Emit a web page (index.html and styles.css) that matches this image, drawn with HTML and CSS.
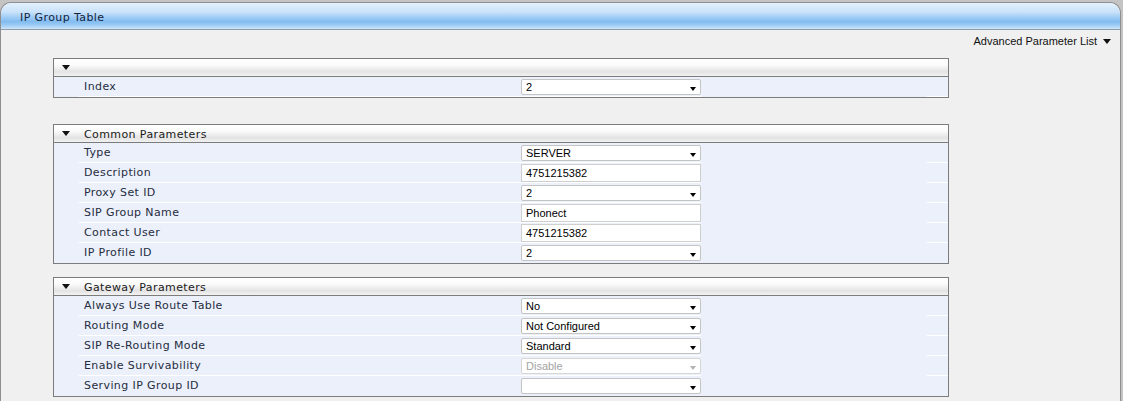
FILE: index.html
```html
<!DOCTYPE html>
<html>
<head>
<meta charset="utf-8">
<link rel="stylesheet" href="styles.css">
</head>
<body>
<div class="window">
  <div class="titlebar">IP Group Table</div>
  <div class="content">
    <div class="adv">Advanced Parameter List <span class="tri"></span></div>

    <div class="panel p1">
      <div class="phead"><span class="tri"></span></div>
      <div class="row"><span class="ind"></span><span class="lbl">Index</span><span class="val"><span class="sel"><span class="v">2</span><span class="arr"></span></span></span><span class="sp"></span><span class="end"></span></div>
    </div>

    <div class="panel p2">
      <div class="phead"><span class="tri"></span><span class="ht">Common Parameters</span></div>
      <div class="row"><span class="ind"></span><span class="lbl">Type</span><span class="val"><span class="sel"><span class="v">SERVER</span><span class="arr"></span></span></span><span class="sp"></span><span class="end"></span></div>
      <div class="row"><span class="ind"></span><span class="lbl">Description</span><span class="val"><span class="txt">4751215382</span></span><span class="sp"></span><span class="end"></span></div>
      <div class="row"><span class="ind"></span><span class="lbl">Proxy Set ID</span><span class="val"><span class="sel"><span class="v">2</span><span class="arr"></span></span></span><span class="sp"></span><span class="end"></span></div>
      <div class="row"><span class="ind"></span><span class="lbl">SIP Group Name</span><span class="val"><span class="txt">Phonect</span></span><span class="sp"></span><span class="end"></span></div>
      <div class="row"><span class="ind"></span><span class="lbl">Contact User</span><span class="val"><span class="txt">4751215382</span></span><span class="sp"></span><span class="end"></span></div>
      <div class="row last"><span class="ind"></span><span class="lbl">IP Profile ID</span><span class="val"><span class="sel"><span class="v">2</span><span class="arr"></span></span></span><span class="sp"></span><span class="end"></span></div>
    </div>

    <div class="panel p3">
      <div class="phead"><span class="tri"></span><span class="ht">Gateway Parameters</span></div>
      <div class="row"><span class="ind"></span><span class="lbl">Always Use Route Table</span><span class="val"><span class="sel"><span class="v">No</span><span class="arr"></span></span></span><span class="sp"></span><span class="end"></span></div>
      <div class="row"><span class="ind"></span><span class="lbl">Routing Mode</span><span class="val"><span class="sel"><span class="v">Not Configured</span><span class="arr"></span></span></span><span class="sp"></span><span class="end"></span></div>
      <div class="row"><span class="ind"></span><span class="lbl">SIP Re-Routing Mode</span><span class="val"><span class="sel"><span class="v">Standard</span><span class="arr"></span></span></span><span class="sp"></span><span class="end"></span></div>
      <div class="row"><span class="ind"></span><span class="lbl">Enable Survivability</span><span class="val"><span class="sel dis"><span class="v">Disable</span><span class="arr"></span></span></span><span class="sp"></span><span class="end"></span></div>
      <div class="row last"><span class="ind"></span><span class="lbl">Serving IP Group ID</span><span class="val"><span class="sel"><span class="v"></span><span class="arr"></span></span></span><span class="sp"></span><span class="end"></span></div>
    </div>
  </div>
</div>
</body>
</html>
```

FILE: styles.css
```css
html, body {
  margin: 0;
  padding: 0;
}
body {
  background: #c4c4c4;
  width: 1123px;
  height: 401px;
  overflow: hidden;
}
.window {
  margin: 2px 0 0 0;
  width: 1119px;
  height: 399px;
  border: 1px solid #8f8f8f;
  border-bottom: none;
  border-radius: 11px 11px 0 0;
  background: #f0f0f0;
  overflow: hidden;
}
.titlebar {
  height: 26px;
  border-bottom: 1px solid #8c9cab;
  background: linear-gradient(#e4f1fd 0%, #c9e2fa 35%, #9fccf4 55%, #82bcf0 72%, #9ccbf4 85%, #cde5fa 100%);
  font-family: "DejaVu Sans", Verdana, sans-serif;
  font-size: 11px;
  letter-spacing: 0.4px;
  line-height: 29px;
  color: #14233c;
  padding-left: 19px;
}
.content {
  padding: 0 0 0 52px;
}
.adv {
  display: flex;
  justify-content: flex-end;
  align-items: center;
  gap: 6px;
  padding: 4px 9px 0 0;
  height: 14px;
  font-family: "Liberation Sans", Arial, sans-serif;
  font-size: 11px;
  color: #111;
  margin-bottom: 10px;
}
.tri {
  display: inline-block;
  width: 0;
  height: 0;
  border-left: 4px solid transparent;
  border-right: 4px solid transparent;
  border-top: 5px solid #111;
}
.panel {
  width: 894px;
  border: 1px solid #7c7c7c;
  background: #ebf0fb;
}
.p2 { margin-top: 26px; }
.p3 { margin-top: 13px; }
.phead {
  height: 17px;
  border-bottom: 1px solid #7c7c7c;
  background: linear-gradient(#ffffff 0%, #fbfbfb 35%, #e3e3e3 75%, #f2f2f2 100%);
  display: flex;
  align-items: center;
  padding-left: 8px;
  font-family: "DejaVu Sans", Verdana, sans-serif;
  font-size: 11px;
  letter-spacing: 0.4px;
  color: #1a1a1a;
}
.phead .ht { margin-left: 14px; padding-top: 1px; }
.row {
  display: grid;
  grid-template-columns: 25px 440px 182px 226px 21px;
  height: 20px;
}
.row > span {
  border-bottom: 1px solid #ffffff;
  box-sizing: border-box;
}
.row > .ind, .row > .sp { border-bottom: none; }
.row.last > span { border-bottom: none; }
.lbl {
  padding: 1px 0 0 5px;
  font-family: "DejaVu Sans", Verdana, sans-serif;
  font-size: 11px;
  letter-spacing: 0.4px;
  line-height: 18px;
  color: #262d40;
}
.val {
  padding: 2px 0 0 2px;
}
.sel, .txt {
  display: flex;
  align-items: center;
  box-sizing: border-box;
  width: 180px;
  height: 16px;
  background: #fff;
  border: 1px solid #c4c4c4;
  border-radius: 2px;
  font-family: "Liberation Sans", Arial, sans-serif;
  font-size: 11px;
  color: #000;
  padding-left: 4px;
}
.txt {
  height: 18px;
  margin-top: -1px;
  border-color: #cfcfcf;
  border-radius: 0;
}
.sel .arr {
  margin-left: auto;
  margin-right: 4px;
  margin-top: 3px;
  width: 0;
  height: 0;
  border-left: 3.5px solid transparent;
  border-right: 3.5px solid transparent;
  border-top: 4px solid #000;
}
.sel.dis {
  border-color: #d6d6d6;
  color: #a3a3a3;
}
.sel.dis .arr { border-top-color: #b3b3b3; }
```
